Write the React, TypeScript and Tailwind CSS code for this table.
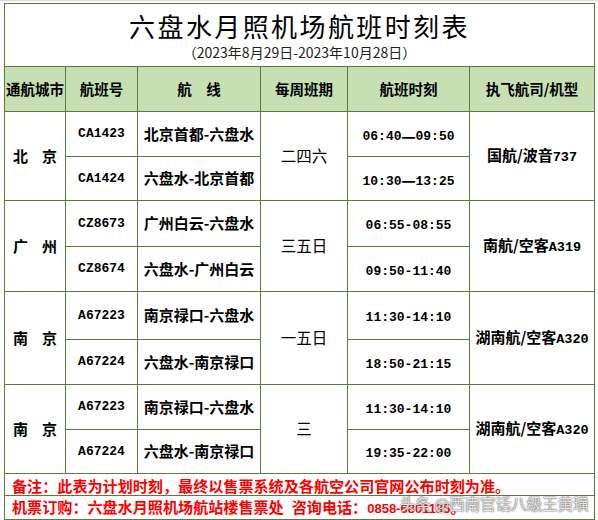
const cjk = "font-['Noto_Sans_CJK_SC',sans-serif]";
const mono = "font-['Liberation_Mono',monospace]";
const cell = 'border border-[#5b7b3c] p-0 text-center align-middle';

type Flight = { no: string; route: string; dep: string; arr: string; h: number };

type Group = {
  city: [string, string];
  days: string;
  airlineCn: string;
  model: string;
  longDash: boolean;
  flights: [Flight, Flight];
};

const groups: Group[] = [
  {
    city: ['北', '京'],
    days: '二四六',
    airlineCn: '国航/波音',
    model: '737',
    longDash: true,
    flights: [
      { no: 'CA1423', route: '北京首都-六盘水', dep: '06:40', arr: '09:50', h: 45 },
      { no: 'CA1424', route: '六盘水-北京首都', dep: '10:30', arr: '13:25', h: 44 },
    ],
  },
  {
    city: ['广', '州'],
    days: '三五日',
    airlineCn: '南航/空客',
    model: 'A319',
    longDash: false,
    flights: [
      { no: 'CZ8673', route: '广州白云-六盘水', dep: '06:55', arr: '08:55', h: 46 },
      { no: 'CZ8674', route: '六盘水-广州白云', dep: '09:50', arr: '11:40', h: 45 },
    ],
  },
  {
    city: ['南', '京'],
    days: '一五日',
    airlineCn: '湖南航/空客',
    model: 'A320',
    longDash: false,
    flights: [
      { no: 'A67223', route: '南京禄口-六盘水', dep: '11:30', arr: '14:10', h: 48 },
      { no: 'A67224', route: '六盘水-南京禄口', dep: '18:50', arr: '21:15', h: 45 },
    ],
  },
  {
    city: ['南', '京'],
    days: '三',
    airlineCn: '湖南航/空客',
    model: 'A320',
    longDash: false,
    flights: [
      { no: 'A67223', route: '南京禄口-六盘水', dep: '11:30', arr: '14:10', h: 45 },
      { no: 'A67224', route: '六盘水-南京禄口', dep: '19:35', arr: '22:00', h: 44 },
    ],
  },
];

function Time({ f, longDash }: { f: Flight; longDash: boolean }) {
  if (longDash) {
    return (
      <span className="inline-flex items-center leading-none">
        <span className={`${mono} text-[13px] font-bold`}>{f.dep}</span>
        <span className={`${cjk} text-[14px] font-bold leading-none`}>一</span>
        <span className={`${mono} text-[13px] font-bold`}>{f.arr}</span>
      </span>
    );
  }
  return <span className={`${mono} text-[13px] font-bold`}>{f.dep}-{f.arr}</span>;
}

export default function App() {
  return (
    <div className="relative h-[520px] w-[598px] overflow-hidden bg-white">
      <div className="h-[3px] border-t border-[#d9d9d9]" />
      <div className="pl-[4px]">
        <table className="w-[590px] table-fixed border-collapse text-black">
          <colgroup>
            <col className="w-[61px]" />
            <col className="w-[72px]" />
            <col className="w-[123px]" />
            <col className="w-[87px]" />
            <col className="w-[122px]" />
            <col className="w-[125px]" />
          </colgroup>
          <tbody>
            <tr className="h-[63px]">
              <td colSpan={6} className={`${cell} align-top`}>
                <div className="flex flex-col items-center pt-[6px]">
                  <div className={`${cjk} text-[26px] leading-[32px] tracking-[2.4px]`}>六盘水月照机场航班时刻表</div>
                  <div className={`${cjk} text-[14px] leading-[20px] text-[#222]`}>
                    （2023年8月29日-2023年10月28日）
                  </div>
                </div>
              </td>
            </tr>
            <tr className={`h-[45px] bg-[#c6e0b4] ${cjk} text-[14.5px] font-bold`}>
              <td className={`${cell} whitespace-nowrap`}>通航城市</td>
              <td className={cell}>航班号</td>
              <td className={cell}>航　线</td>
              <td className={cell}>每周班期</td>
              <td className={cell}>航班时刻</td>
              <td className={`${cell} whitespace-nowrap`}>执飞航司/机型</td>
            </tr>
            {groups.map((g, gi) =>
              g.flights.map((f, fi) => (
                <tr key={`${gi}-${fi}`} style={{ height: f.h }}>
                  {fi === 0 && (
                    <td rowSpan={2} className={cell}>
                      <div className={`${cjk} flex justify-between px-[8px] text-[15px] font-bold`}>
                        <span>{g.city[0]}</span>
                        <span>{g.city[1]}</span>
                      </div>
                    </td>
                  )}
                  <td className={`${cell} ${mono} text-[13px] font-bold`}>{f.no}</td>
                  <td className={`${cell} ${cjk} whitespace-nowrap text-[15px] font-bold`}>{f.route}</td>
                  {fi === 0 && (
                    <td rowSpan={2} className={`${cell} ${cjk} text-[15.5px]`}>
                      {g.days}
                    </td>
                  )}
                  <td className={cell}>
                    <Time f={f} longDash={g.longDash} />
                  </td>
                  {fi === 0 && (
                    <td rowSpan={2} className={`${cell} whitespace-nowrap`}>
                      <span className={`${cjk} text-[15px] font-bold`}>{g.airlineCn}</span>
                      <span className={`${mono} text-[13.5px] font-bold`}>{g.model}</span>
                    </td>
                  )}
                </tr>
              ))
            )}
            <tr className="h-[22px]">
              <td colSpan={6} className={`${cell} text-left`}>
                <div className={`${cjk} pl-[7px] text-[15.1px] font-bold leading-[20px] whitespace-nowrap text-[#ff0000]`}>
                  备注：此表为计划时刻，最终以售票系统及各航空公司官网公布时刻为准。
                </div>
              </td>
            </tr>
            <tr className="h-[22px]">
              <td colSpan={6} className={`${cell} text-left`}>
                <div className={`${cjk} pl-[7px] text-[15.1px] font-bold leading-[20px] whitespace-nowrap text-[#ff0000]`}>
                  机票订购：六盘水月照机场航站楼售票处
                  <span className="ml-[8px]">咨询电话：</span>
                  <span className="font-['Liberation_Sans',sans-serif] text-[13px]">0858-6801135</span>。
                </div>
              </td>
            </tr>
          </tbody>
        </table>
      </div>
      <div
        className={`${cjk} pointer-events-none absolute left-[400px] top-[492px] whitespace-nowrap text-[15.5px] text-white/85 [text-shadow:0_0_1px_#444,0_0_2px_#666]`}
      >
        头条 @西南官话八级王黄璜
      </div>
    </div>
  );
}
